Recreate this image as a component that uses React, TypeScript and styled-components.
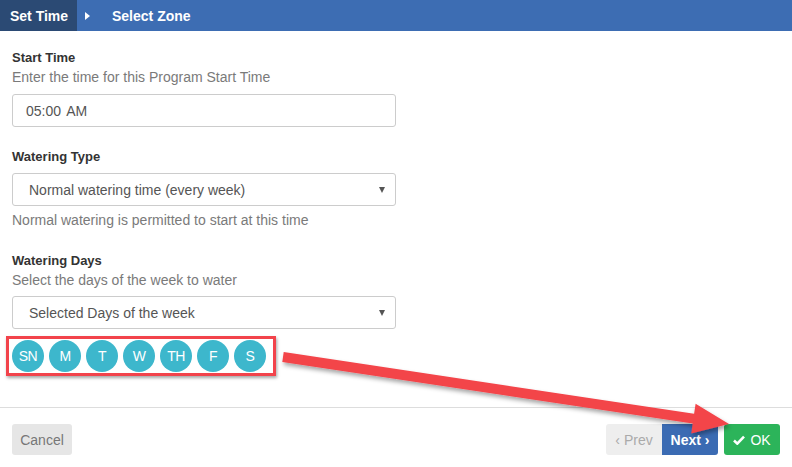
import React from "react";
import styled, { createGlobalStyle } from "styled-components";

const Global = createGlobalStyle`
  html, body { margin: 0; padding: 0; background: #fff; }
  body { font-family: "Liberation Sans", Arial, sans-serif; width: 792px; height: 467px; overflow: hidden; }
  * { box-sizing: border-box; }
`;

const Page = styled.div`
  position: relative;
  width: 792px;
  height: 467px;
  display: flex;
  flex-direction: column;
`;

const Header = styled.div`
  height: 31px;
  background: #3d6db3;
  display: flex;
  align-items: center;
  color: #fff;
  font-weight: bold;
  font-size: 14px;
  white-space: nowrap;
`;

const Step = styled.div<{ $active?: boolean }>`
  height: 100%;
  display: flex;
  align-items: center;
  flex-shrink: 0;
  padding-left: ${(p) => (p.$active ? "10px" : "0")};
  width: ${(p) => (p.$active ? "77px" : "auto")};
  background: ${(p) => (p.$active ? "#2b4a74" : "transparent")};
`;

const Caret = styled.span`
  width: 0;
  height: 0;
  border-top: 4px solid transparent;
  border-bottom: 4px solid transparent;
  border-left: 5px solid #fff;
  margin: 0 22px 0 8px;
`;

const Body = styled.div`
  flex: 1;
  padding: 18px 396px 0 12px;
  display: flex;
  flex-direction: column;
  width: 792px;
`;

const Group = styled.div<{ $top: number }>`
  margin-top: ${(p) => p.$top}px;
  display: flex;
  flex-direction: column;
  width: 384px;
`;

const Label = styled.div`
  font-size: 13px;
  font-weight: bold;
  color: #333;
  line-height: 18px;
`;

const Hint = styled.div<{ $gap?: number }>`
  font-size: 14px;
  color: #7a7a7a;
  line-height: 18px;
  margin-top: ${(p) => p.$gap ?? 1}px;
`;

const Field = styled.div<{ $gap: number }>`
  margin-top: ${(p) => p.$gap}px;
  height: 33px;
  border: 1px solid #ccc;
  border-radius: 3px;
  display: flex;
  align-items: center;
  justify-content: space-between;
  padding: 0 10px 0 16px;
  font-size: 14px;
  color: #555;
  background: #fff;
  width: 384px;
`;

const TimeText = styled.span`
  margin-left: -3px;
  word-spacing: 2px;
`;

const Arrow = styled.span`
  width: 0;
  height: 0;
  border-left: 3px solid transparent;
  border-right: 3px solid transparent;
  border-top: 6px solid #555;
`;

const Days = styled.div`
  position: relative;
  margin-top: 11px;
  display: flex;
  gap: 5px;
`;

const Day = styled.div`
  width: 32px;
  height: 32px;
  border-radius: 50%;
  background: #3db7cc;
  color: #fff;
  font-size: 14px;
  display: flex;
  align-items: center;
  justify-content: center;
  letter-spacing: -0.5px;
`;

const HighlightBox = styled.div`
  position: absolute;
  left: -6px;
  top: -4px;
  width: 270px;
  height: 40px;
  border: 3px solid #f2434b;
  box-shadow: 1px 2px 3px rgba(0, 0, 0, 0.35);
  pointer-events: none;
`;

const Footer = styled.div`
  border-top: 1px solid #ddd;
  height: 60px;
  padding: 16px 12px 0 12px;
  display: flex;
  justify-content: space-between;
  align-items: flex-start;
`;

const Btn = styled.div<{ $bg: string; $fg: string; $w: number; $radius?: string; $bold?: boolean }>`
  width: ${(p) => p.$w}px;
  height: 31px;
  background: ${(p) => p.$bg};
  color: ${(p) => p.$fg};
  border-radius: ${(p) => p.$radius ?? "3px"};
  font-size: 14px;
  font-weight: ${(p) => (p.$bold ? "bold" : "normal")};
  display: flex;
  align-items: center;
  justify-content: center;
  gap: 5px;
`;

const BtnGroup = styled.div`
  display: flex;
  gap: 6px;
`;

const Pager = styled.div`
  display: flex;
`;

const Overlay = styled.svg`
  position: absolute;
  left: 0;
  top: 0;
  pointer-events: none;
`;

const days = ["SN", "M", "T", "W", "TH", "F", "S"];

export default function App() {
  // annotation arrow geometry
  const sx = 283, sy = 357, tx = 729, ty = 424;
  const dx = tx - sx, dy = ty - sy;
  const len = Math.hypot(dx, dy);
  const ux = dx / len, uy = dy / len;
  const nx = -uy, ny = ux;
  const headLen = 36, headW = 15, shaftW = 5;
  const bx = tx - ux * headLen, by = ty - uy * headLen;
  const pts = [
    [sx + nx * shaftW, sy + ny * shaftW],
    [bx + nx * shaftW, by + ny * shaftW],
    [bx + nx * headW, by + ny * headW],
    [tx, ty],
    [bx - nx * headW, by - ny * headW],
    [bx - nx * shaftW, by - ny * shaftW],
    [sx - nx * shaftW, sy - ny * shaftW],
  ]
    .map((p) => p.map((v) => v.toFixed(1)).join(","))
    .join(" ");

  return (
    <Page>
      <Global />
      <Header>
        <Step $active>Set Time</Step>
        <Caret />
        <span>Select Zone</span>
      </Header>
      <Body>
        <Group $top={0}>
          <Label>Start Time</Label>
          <Hint>Enter the time for this Program Start Time</Hint>
          <Field $gap={8}>
            <TimeText>05:00 AM</TimeText>
          </Field>
        </Group>
        <Group $top={21}>
          <Label>Watering Type</Label>
          <Field $gap={7}>
            <span>Normal watering time (every week)</span>
            <Arrow />
          </Field>
          <Hint $gap={5}>Normal watering is permitted to start at this time</Hint>
        </Group>
        <Group $top={23}>
          <Label>Watering Days</Label>
          <Hint>Select the days of the week to water</Hint>
          <Field $gap={7}>
            <span>Selected Days of the week</span>
            <Arrow />
          </Field>
          <Days>
            {days.map((d) => (
              <Day key={d}>{d}</Day>
            ))}
            <HighlightBox />
          </Days>
        </Group>
      </Body>
      <Footer>
        <Btn $bg="#e6e6e6" $fg="#777" $w={60}>Cancel</Btn>
        <BtnGroup>
          <Pager>
            <Btn $bg="#eeeeee" $fg="#aaa" $w={56} $radius="3px 0 0 3px">‹ Prev</Btn>
            <Btn $bg="#3b6bb3" $fg="#fff" $w={56} $radius="0 3px 3px 0" $bold>Next ›</Btn>
          </Pager>
          <Btn $bg="#2cb45a" $fg="#fff" $w={56}>
            <svg width="12" height="10" viewBox="0 0 12 10">
              <path d="M1 5.5 L4.3 8.6 L11 1.6" stroke="#fff" strokeWidth="2.6" fill="none" />
            </svg>
            OK
          </Btn>
        </BtnGroup>
      </Footer>
      <Overlay width="792" height="467" viewBox="0 0 792 467">
        <defs>
          <filter id="sh" x="-10%" y="-50%" width="120%" height="200%">
            <feDropShadow dx="1.5" dy="3" stdDeviation="2" floodColor="#000" floodOpacity="0.35" />
          </filter>
        </defs>
        <polygon points={pts} fill="#f3444a" filter="url(#sh)" />
      </Overlay>
    </Page>
  );
}
